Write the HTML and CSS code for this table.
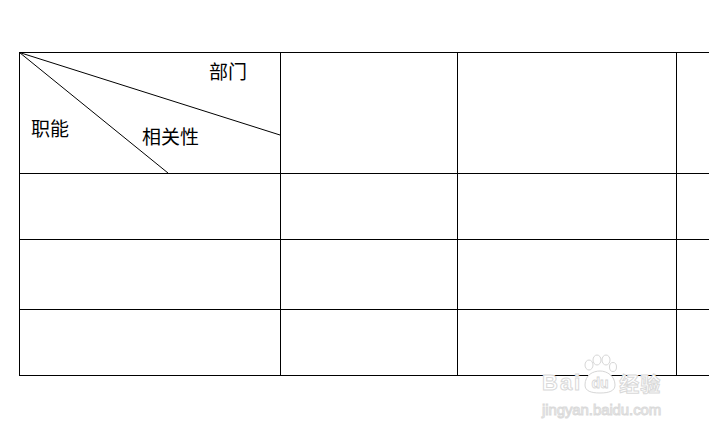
FILE: index.html
```html
<!DOCTYPE html>
<html lang="zh">
<head>
<meta charset="utf-8">
<link rel="stylesheet" href="styles.css">
</head>
<body>
<div class="page">
  <div class="grid">
    <div class="cell head">
      <svg class="diag" width="262" height="122" viewBox="0 0 262 122">
        <line x1="0.5" y1="0.5" x2="261" y2="83" stroke="#000" stroke-width="1"/>
        <line x1="0.5" y1="0.5" x2="149" y2="121" stroke="#000" stroke-width="1"/>
      </svg>
      <span class="lbl dept">部门</span>
      <span class="lbl func">职能</span>
      <span class="lbl rel">相关性</span>
    </div>
    <div class="cell"></div><div class="cell"></div><div class="cell"></div>
    <div class="cell"></div><div class="cell"></div><div class="cell"></div><div class="cell"></div>
    <div class="cell"></div><div class="cell"></div><div class="cell"></div><div class="cell"></div>
    <div class="cell"></div><div class="cell"></div><div class="cell"></div><div class="cell"></div>
  </div>
  <div class="watermark">
    <div class="wm-top">
      <span class="wm-bai">Bai</span>
      <svg class="paw" width="36" height="40" viewBox="0 0 36 40">
        <g fill="#fff" stroke="#d6d6d6" stroke-width="1">
          <ellipse cx="7" cy="11" rx="4" ry="5"/>
          <ellipse cx="15" cy="6" rx="4" ry="5"/>
          <ellipse cx="24" cy="6" rx="4" ry="5"/>
          <ellipse cx="31" cy="13" rx="3.5" ry="4.5"/>
          <path d="M3 31 C3 21 11 17 18 17 C25 17 33 22 33 31 C33 37 27 39 18 39 C9 39 3 37 3 31 Z"/>
        </g>
        <text x="18" y="34" text-anchor="middle" class="paw-du">du</text>
      </svg>
      <span class="wm-jy">经验</span>
    </div>
    <div class="wm-url">jingyan.baidu.com</div>
  </div>
</div>
</body>
</html>
```
FILE: styles.css
```css
html, body {
  margin: 0;
  padding: 0;
  background: #fff;
  overflow: hidden;
}
.page {
  position: relative;
  width: 709px;
  height: 431px;
  padding: 52px 0 0 19px;
  box-sizing: border-box;
  overflow: hidden;
  font-family: "Noto Sans CJK SC", "Noto Sans", sans-serif;
}
.grid {
  display: grid;
  grid-template-columns: 261px 177px 219px 32px;
  grid-template-rows: 121px 66px 70px 66px;
  border-left: 1px solid #000;
  border-top: 1px solid #000;
  width: max-content;
}
.cell {
  box-sizing: border-box;
  border-right: 1px solid #000;
  border-bottom: 1px solid #000;
}
.cell:nth-child(4n) {
  border-right: none;
}
.head {
  position: relative;
}
.diag {
  position: absolute;
  left: -1px;
  top: -1px;
}
.lbl {
  position: absolute;
  font-size: 19px;
  line-height: 1;
  color: #000;
  white-space: nowrap;
}
.dept { left: 189px; top: 8px; }
.func { left: 11px; top: 65px; }
.rel { left: 122px; top: 73px; }

.watermark {
  position: absolute;
  left: 542px;
  top: 352px;
  width: 130px;
  color: #fff;
  font-family: "Liberation Sans", Arial, sans-serif;
}
.wm-top {
  display: flex;
  align-items: flex-end;
  height: 42px;
}
.wm-bai {
  font-size: 22px;
  font-weight: bold;
  line-height: 1;
  letter-spacing: 2px;
  -webkit-text-stroke: 1px #d9d9d9;
}
.paw {
  margin: 0 1px 0 0;
}
.paw-du {
  font-family: "Liberation Sans", Arial, sans-serif;
  font-size: 14px;
  font-weight: bold;
  fill: #fff;
  stroke: #d6d6d6;
  stroke-width: 0.8;
}
.wm-jy {
  font-family: "Noto Sans CJK SC", sans-serif;
  font-size: 20px;
  font-weight: bold;
  line-height: 1;
  letter-spacing: 1px;
  -webkit-text-stroke: 1px #d9d9d9;
}
.wm-url {
  margin-top: 8px;
  font-size: 15px;
  line-height: 1;
  letter-spacing: -0.1px;
  -webkit-text-stroke: 1px #dadada;
}
```
